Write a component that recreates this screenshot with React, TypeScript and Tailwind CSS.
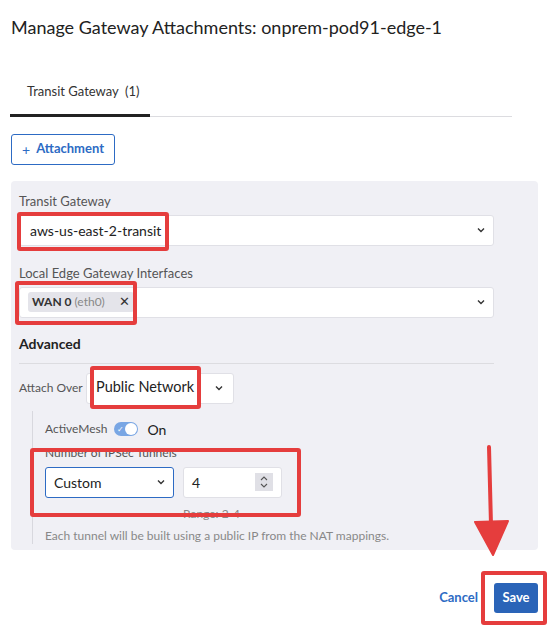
import React from "react";

const font = { fontFamily: "Lato, 'Noto Sans', sans-serif" };

function Chevron() {
  return (
    <svg width="8" height="6" viewBox="0 0 8 6">
      <path d="M1 1.5 L4 4.5 L7 1.5" fill="none" stroke="#333" strokeWidth="1.4" />
    </svg>
  );
}

// red annotation frame drawn over a control
function Mark({ className }: { className: string }) {
  return <span className={"absolute border-[4px] border-[#e53d3d] rounded-[3px] pointer-events-none " + className} />;
}

function Field({ label, children }: { label: string; children: React.ReactNode }) {
  return (
    <div>
      <div className="text-[13px] text-[#555] leading-[16px] mb-[6px]">{label}</div>
      {children}
    </div>
  );
}

export default function App() {
  return (
    <div className="relative w-[550px] h-[629px] bg-white text-[#222] overflow-hidden" style={font}>
      {/* Header */}
      <h1 className="pl-[11px] pt-[15px] text-[18px] leading-[24px] text-[#222]">
        Manage Gateway Attachments: onprem-pod91-edge-1
      </h1>

      {/* Tabs */}
      <div className="mt-[43px] mx-[10px] w-[502px] border-b border-[#dcdce0] flex">
        <div className="w-[140px] pl-[17px] pb-[12px] border-b-[3px] border-[#222] -mb-px text-[13px] text-[#333]">
          Transit Gateway&nbsp;&nbsp;(1)
        </div>
      </div>

      <div className="px-[11px] pt-[17px]">
        <button className="h-[31px] px-[10px] border border-[#2d6bc4] rounded-[3px] text-[#2d6bc4] text-[13px] font-bold flex items-center gap-[6px]">
          <span className="font-normal text-[14px]">+</span>
          Attachment
        </button>

        {/* Panel */}
        <div className="mt-[16px] w-[527px] h-[369px] bg-[#f0f0f5] rounded-[4px] pl-[8px] pt-[12px]">
          <div className="w-[475px] flex flex-col gap-[19px]">
            <Field label="Transit Gateway">
              <div className="relative h-[31px] bg-white border border-[#e0e0e6] rounded-[3px] flex items-center justify-between pl-[10px] pr-[8px]">
                <Mark className="-left-[3px] -top-[4px] w-[152px] h-[39px]" />
                <span className="relative text-[14px] text-[#222]">aws-us-east-2-transit</span>
                <Chevron />
              </div>
            </Field>
            <Field label="Local Edge Gateway Interfaces">
              <div className="relative h-[31px] bg-white border border-[#e0e0e6] rounded-[3px] flex items-center justify-between pl-[8px] pr-[8px]">
                <Mark className="-left-[5px] -top-[7px] w-[122px] h-[44px]" />
                <span className="h-[20px] px-[4px] rounded-[3px] bg-[#e4e4ea] text-[12px] flex items-center">
                  <b className="text-[#333]">WAN 0</b>
                  <span className="ml-[3px] text-[#888]">(eth0)</span>
                  <span className="ml-[14px] text-[#333] text-[13px]">✕</span>
                </span>
                <Chevron />
              </div>
            </Field>
          </div>

          {/* Advanced */}
          <div className="w-[475px] mt-[15px] pb-[9px] border-b border-[#dcdce0] text-[14px] font-bold text-[#222]">
            Advanced
          </div>
          <div className="mt-[9px] flex items-center">
            <span className="text-[12px] text-[#555] w-[67px]">Attach Over</span>
            <div className="relative h-[31px] w-[148px] bg-white border border-[#e0e0e6] rounded-[3px] flex items-center justify-end pr-[10px]">
              <span className="absolute left-[3px] -top-[8px] w-[111px] h-[43px] border-[4px] border-[#e53d3d] rounded-[3px] bg-white flex items-center pl-[2px]">
                <span className="text-[14.5px] text-[#222] whitespace-nowrap">Public Network</span>
              </span>
              <Chevron />
            </div>
          </div>

          <div className="relative ml-[13px] mt-[7px] border-l border-[#d8d8de] pl-[12px] pt-[8px] h-[133px]">
            <div className="flex items-center">
              <span className="text-[12px] text-[#555]">ActiveMesh</span>
              <span className="ml-[7px] w-[24px] h-[14px] rounded-full bg-[#79a6e4] relative inline-block">
                <span className="absolute left-[3px] top-[1px] text-[8px] text-white leading-[12px]">✓</span>
                <span className="absolute right-[1px] top-[1px] w-[12px] h-[12px] rounded-full bg-white" />
              </span>
              <span className="ml-[9px] text-[14px] text-[#222]">On</span>
            </div>
            <div className="mt-[6px] text-[12px] text-[#555] leading-[14px]">Number of IPSec Tunnels</div>
            <div className="mt-[7px] flex gap-[9px]">
              <div className="h-[31px] w-[129px] bg-white border border-[#2d6bc4] rounded-[3px] flex items-center justify-between pl-[8px] pr-[8px]">
                <span className="text-[14px]">Custom</span>
                <Chevron />
              </div>
              <div>
                <div className="h-[31px] w-[99px] bg-white border border-[#e0e0e6] rounded-[3px] flex items-center justify-between pl-[8px] pr-[8px]">
                  <span className="text-[14px]">4</span>
                  <span className="w-[18px] h-[18px] bg-[#e0e0e6] flex items-center justify-center">
                    <svg width="10" height="14" viewBox="0 0 10 14">
                      <path d="M2 5 L5 2 L8 5 M2 9 L5 12 L8 9" fill="none" stroke="#555" strokeWidth="1.1" />
                    </svg>
                  </span>
                </div>
                <div className="mt-[9px] text-[12px] text-[#888] leading-[14px]">Range: 2-4</div>
              </div>
            </div>
            <div className="mt-[8px] text-[12px] text-[#888] leading-[14px]">
              Each tunnel will be built using a public IP from the NAT mappings.
            </div>
            <Mark className="-left-[3px] top-[37px] w-[271px] h-[69px]" />
          </div>
        </div>
      </div>

      {/* Footer */}
      <div className="mt-[33px] pr-[12px] flex justify-end items-center gap-[16px]">
        <span className="text-[13px] font-bold text-[#2d6bc4]">Cancel</span>
        <div className="relative">
          <Mark className="-left-[13px] -top-[12px] w-[66px] h-[54px]" />
          <button className="h-[30px] w-[44px] rounded-[3px] bg-[#2a64b8] text-white text-[13px] font-bold">Save</button>
        </div>
      </div>

      {/* Annotation arrow */}
      <svg className="absolute left-[470px] top-[440px]" width="45" height="120" viewBox="0 0 45 120">
        <path d="M19 7 L21 85" stroke="#e53d3d" strokeWidth="4" strokeLinecap="round" />
        <path d="M5 82 L38 81 L23 115 Z" fill="#e53d3d" stroke="#e53d3d" strokeWidth="2" strokeLinejoin="round" />
      </svg>
    </div>
  );
}
